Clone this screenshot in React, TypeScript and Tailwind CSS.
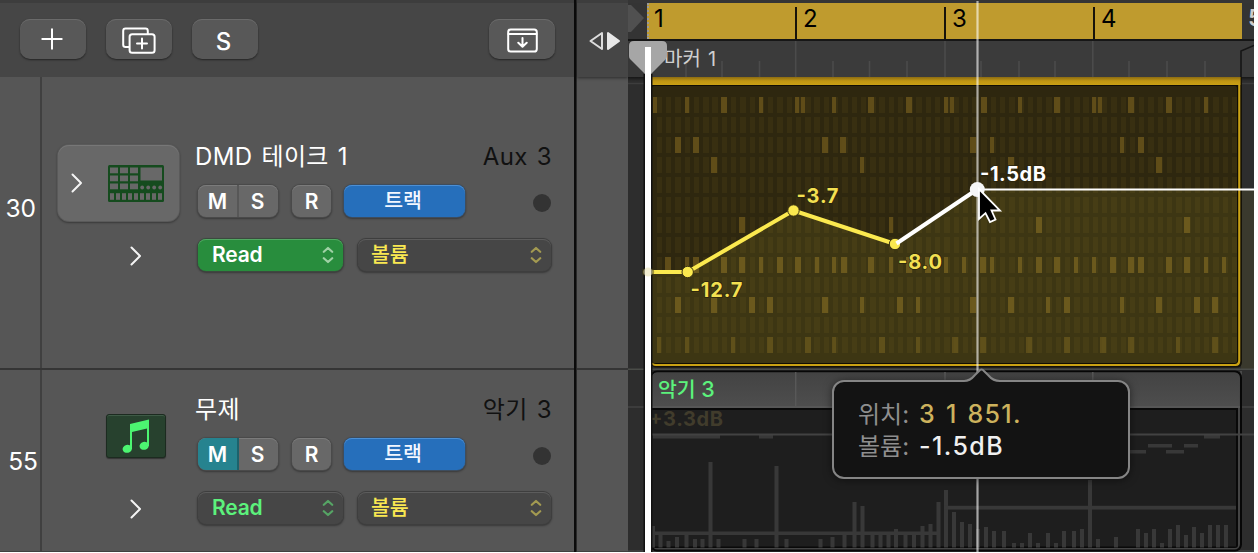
import React from 'react';

const FONT = "font-['Inter','Noto_Sans_CJK_KR',sans-serif]";

type Point = [number, number];

// [row, x positions of 6px hits, x positions of 4px hits]
const STEPS: [number, number[], number[]][] = [
  [0, [721, 868, 906, 981, 1054, 1128, 1166], [653, 685, 759, 795, 801, 832, 944, 950, 1018, 1092, 1098, 1204]],
  [2, [675, 693, 822, 840, 970, 1138], [990, 1120]],
  [3, [711, 1008, 1156], [860]],
  [6, [739, 1036, 1184], [889]],
  [8, [665, 693, 721, 739, 777, 795, 841, 868, 906, 925, 980, 1036, 1054, 1110, 1128, 1138, 1166, 1184], [685, 759, 815, 832, 889, 944, 962, 990, 1018, 1074, 1092, 1204, 1222]],
  [10, [675, 711, 749, 767, 822, 897, 970, 1008, 1064, 1156, 1194, 1212], [860, 916, 1046, 1120]],
  [12, [767, 805, 879, 952, 980, 1026, 1064, 1100, 1128, 1212], [657, 685, 731, 832, 916, 1176]],
];

const ROWS = Array.from({ length: 13 }, (_, i) => i);
const COLS = Array.from({ length: 63 }, (_, i) => i + 1);

const CURVE: Point[] = [[648, 272], [687.7, 272], [793.5, 210.5], [895, 244]];

// [x center, top]
const VELOCITIES: Point[] = [
  [653, 526], [660.5, 535], [668.5, 541], [677, 537], [686.5, 535], [695, 539], [702.5, 539], [710.5, 462], [718.5, 539],
  [744.5, 539], [756.5, 539], [776.5, 466], [786.5, 539], [820.5, 539], [832.5, 537], [844.5, 535], [854.5, 502], [862.5, 506],
  [872.5, 535], [880.5, 535], [888.5, 533], [896, 529], [905.5, 533], [914, 533], [922.5, 526], [930.5, 524], [938.5, 502],
  [946, 490], [954, 512], [962, 522], [970, 524], [978, 529], [986, 527], [994, 531], [1004, 531], [1014, 543], [1022, 543],
  [1030, 533], [1038, 543], [1048, 533], [1056, 543], [1064, 531], [1074, 531], [1082, 529], [1090, 480], [1098, 539],
  [1116, 537], [1138, 529], [1146, 533], [1154, 529], [1162, 543], [1170, 529], [1178, 525], [1186, 535], [1194, 527],
  [1202, 533], [1210, 525], [1218, 525], [1226, 525],
];

const NOTES: [number, number, number][] = [
  [653, 67, 435], [759, 14, 435], [1130, 16, 450], [1148, 24, 444], [1166, 18, 450], [1184, 14, 444], [1204, 16, 435],
];

const BEATS = [686, 722, 759.5, 833, 869.5, 907, 981, 1019, 1055, 1129, 1167, 1205];

const Chevron = () => (
  <svg width="14" height="20" viewBox="0 0 14 20" fill="none" stroke="#f4f4f4" strokeWidth="2" strokeLinecap="round" strokeLinejoin="round">
    <path d="M2.500 1.500 11 10 2.500 18.500" />
  </svg>
);

const ToolButton = ({ children, className = '' }: { children: React.ReactNode; className?: string }) => (
  <button className={`w-[66px] h-10 rounded-[10px] bg-[#585858] flex items-center justify-center text-white shadow-[0_1px_2px_rgba(0,0,0,0.5),inset_0_1px_0_#6a6a6a] ${className}`}>
    {children}
  </button>
);

const Select = ({ label, className, arrow, textClass }: { label: string; className: string; arrow: string; textClass: string }) => (
  <div className={`h-[32px] rounded-[8px] flex items-center justify-between pl-3.5 pr-[9px] ${className}`}>
    <span className={textClass}>{label}</span>
    <svg width="12" height="18" viewBox="0 0 12 18" fill="none" stroke={arrow} strokeWidth="2.2" strokeLinecap="round" strokeLinejoin="round">
      <path d="M1.800 5.800 6 2 10.200 5.800M1.800 12.200 6 16 10.200 12.200" />
    </svg>
  </div>
);

const DARK_SELECT = 'bg-[#464646] shadow-[0_0_0_1px_#3e3e3e,0_1px_2px_1px_rgba(0,0,0,0.35),inset_0_1px_0_#5c5c5c]';
const RAISED = 'shadow-[0_0_0_1px_#4a4a4a,0_1px_2px_1px_rgba(0,0,0,0.35),inset_0_1px_0_#7b7b7b]';

interface TrackProps {
  name: React.ReactNode;
  channel: React.ReactNode;
  muted?: boolean;
  active?: boolean;
}

const TrackControls = ({ name, channel, muted, active }: TrackProps) => (
  <div className="w-[357px] shrink-0">
    <div className="flex h-8 items-center justify-between text-[24px] tracking-[0.35px] [word-spacing:2px] leading-8">
      <span className="text-white whitespace-nowrap">{name}</span>
      <span className="text-[#111] whitespace-nowrap">{channel}</span>
    </div>
    <div className="mt-[12px] pl-[3px] flex items-center text-[21px] font-semibold text-white">
      <div className={`flex w-[80px] h-[32px] rounded-[8px] overflow-hidden bg-[#686868] ${RAISED}`}>
        <span className={`w-[41px] flex items-center justify-center border-r-2 pt-0.5 ${muted ? 'bg-[#26838f] border-[#1c626c]' : 'border-[#575757]'}`}>M</span>
        <span className="w-[39px] flex items-center justify-center pr-0.5 pt-0.5">S</span>
      </div>
      <div className={`ml-[14px] w-[39px] h-[32px] rounded-[8px] bg-[#686868] flex items-center justify-center pt-0.5 ${RAISED}`}>R</div>
      <div className="ml-[13px] w-[121px] h-[32px] rounded-[8px] bg-[#266fbb] text-[20.5px] font-medium flex items-center justify-center pr-[3px] text-[#f2f7ff] shadow-[0_0_0_1px_#3d4d5f,0_1px_2px_1px_rgba(0,0,0,0.35),inset_0_1px_0_#4c8fd4]">트랙</div>
      <div className="ml-auto mr-[1px] w-[18px] h-[18px] mt-[3px] rounded-full bg-[#333]" />
    </div>
    <div className="mt-[22px] pl-[3px] flex gap-[15px]">
      <Select
        label="Read"
        arrow={active ? '#9fd1a5' : '#56a565'}
        textClass={`text-[21px] font-semibold tracking-[-0.2px] ${active ? 'text-white' : 'text-[#5cf27c]'}`}
        className={`w-[145px] ${active ? 'bg-[#288d3d] shadow-[0_0_0_1px_#3b4a3e,0_1px_2px_1px_rgba(0,0,0,0.35),inset_0_1px_0_#52a863]' : DARK_SELECT}`}
      />
      <Select label="볼륨" arrow="#a39a51" textClass="text-[20.5px] font-medium -ml-[1px] text-[#f9e851]" className={`w-[193px] ${DARK_SELECT}`} />
    </div>
  </div>
);

const DrumMachineIcon = () => (
  <svg width="56" height="37" viewBox="0 0 56 37">
    <rect width="56" height="37" rx="1.5" fill="#154b1e" />
    <g fill="#686868">
      {[2, 12, 22].map((x) => [2.5, 10.5, 18.5].map((y) => <rect key={`${x}-${y}`} x={x} y={y} width="8" height="5.8" />))}
      <rect x="32.5" y="2.5" width="21.5" height="13" />
      {[34.2, 40.2, 46.2, 52.2].map((x) => <circle key={x} cx={x} cy="22.5" r="1.9" />)}
      {[0, 1, 2, 3, 4, 5, 6, 7, 8].map((i) => <rect key={i} x={2 + i * 6} y="28.2" width="4" height="6.6" />)}
    </g>
  </svg>
);

const Toolbar = () => (
  <div className="h-[77px] shrink-0 bg-[#464646] border-t-[3px] border-[#3d3d3d] flex items-start pt-4 pl-5 pr-[19px]">
    <ToolButton className="pr-[2px]">
      <svg width="22" height="22" viewBox="0 0 22 22" stroke="white" strokeWidth="2" strokeLinecap="round"><path d="M11 1.300V20.700M1.300 11H20.700" /></svg>
    </ToolButton>
    <ToolButton className="ml-5 pt-[3px]">
      <svg width="34" height="28" viewBox="0 0 34 28" fill="none" stroke="white" strokeWidth="2" strokeLinecap="round" strokeLinejoin="round">
        <path d="M7 20H3.500Q1.200 20 1.200 17.700V4Q1.200 1.600 3.500 1.600H23.500Q25.800 1.600 25.800 4V7" />
        <rect x="7.600" y="7.200" width="25" height="18.600" rx="2.600" />
        <path d="M20 11.500V21.500M15 16.500H25" />
      </svg>
    </ToolButton>
    <ToolButton className="ml-5 text-[24px] font-medium pt-[5px] pr-[3px]">S</ToolButton>
    <ToolButton className="ml-auto pt-[2px]">
      <svg width="31" height="25" viewBox="0 0 31 25" fill="none" stroke="white" strokeWidth="2" strokeLinecap="round" strokeLinejoin="round">
        <rect x="1.200" y="1.500" width="28.600" height="22" rx="2.600" />
        <path d="M1.500 6H29.500M15.500 10V18.500M11.300 14.700 15.500 18.700 19.700 14.700" />
      </svg>
    </ToolButton>
  </div>
);

const DrumRegion = () => (
  <svg className="block" width="626" height="293" viewBox="628 77 626 293">
    <defs>
      <linearGradient id="cap" x1="0" y1="0" x2="0" y2="1">
        <stop offset="0" stopColor="#8c6c12" />
        <stop offset="0.5" stopColor="#c09613" />
        <stop offset="1" stopColor="#c9a015" />
      </linearGradient>
      <clipPath id="drum"><rect x="652" y="86" width="585" height="277" rx="2" /></clipPath>
      <linearGradient id="shade" x1="0" y1="0" x2="0" y2="1">
        <stop offset="0" stopColor="#000" stopOpacity="0.5" />
        <stop offset="1" stopColor="#000" stopOpacity="0" />
      </linearGradient>
    </defs>
    <rect x="628" y="77" width="626" height="293" fill="#2d2d2d" />
    <rect x="628" y="77" width="626" height="4" fill="url(#shade)" />
    <path d="M628 83.500H652M1241 83.500H1254" stroke="#3d3d3d" strokeWidth="1.5" />
    <rect x="1241" y="190" width="13" height="180" fill="#3a392d" />
    <path d="M651 77H1242V362Q1242 367.500 1236.500 367.500H657Q651 367.500 651 362Z" fill="#15120a" />
    <path d="M651 77H1240.300V361Q1240.300 366 1235.500 366H656Q651.500 366 651.500 362Z" fill="#caa214" />
    <rect x="651" y="77" width="589.3" height="8" fill="url(#cap)" />
    <path d="M651 85H1238.200V360Q1238.200 364 1234.500 364H656Q652 364 651 360Z" fill="#100d04" />
    <g clipPath="url(#drum)">
      <rect x="652" y="86" width="585" height="278" fill="#2e270f" />
      {ROWS.map((r) => COLS.map((c) => {
        const x = Math.round(647.5 + c * 9.275);
        const end = Math.round(652.9 + c * 9.275);
        return <rect key={`${r}-${c}`} x={x} y={97 + r * 20} width={end - x} height="16" fill="#382f11" />;
      }))}
      {STEPS.map(([row, wide, narrow]) => (
        <g key={row} fill="#65511a" opacity={row === 12 ? 0.6 : 0.9}>
          {wide.map((x) => <rect key={`w${x}`} x={x} y={97 + row * 20} width="6" height="16" />)}
          {narrow.map((x) => <rect key={`n${x}`} x={x} y={97 + row * 20} width="4" height="16" />)}
        </g>
      ))}
      <path d="M648 272H687.700L793.500 210.500 895 244 977.500 189.500H1254V364H648Z" fill="#ffee55" opacity="0.075" />
    </g>
    <path d="M628 369.300H1254" stroke="#4a4c48" strokeWidth="1.5" />
    <path d="M977.500 189.500H1254" stroke="white" strokeWidth="2" />
    <path d={`M${CURVE.map((p) => p.join(' ')).join('L')}`} fill="none" stroke="#fbe94f" strokeWidth="4" />
    {CURVE.map(([x, y]) => <circle key={x} cx={x} cy={y} r="5.7" fill="#fbe94f" stroke="#3a3211" strokeWidth="1" opacity={x === 648 ? 0.5 : 1} />)}
    <path d="M896.500 243.500 977 189.500" stroke="white" strokeWidth="4" />
    <g fontFamily="Inter, sans-serif" fontSize="20" fontWeight="700" fill="#f3e051" stroke="#2b240c" strokeWidth="1.5" paintOrder="stroke">
      <text x="690.500" y="296.500" textLength="52">-12.7</text>
      <text x="796.500" y="202.500" textLength="42">-3.7</text>
      <text x="898" y="268.500" textLength="44">-8.0</text>
      <text x="980" y="181" textLength="66" fill="#fff">-1.5dB</text>
    </g>
  </svg>
);

const MidiRegion = () => (
  <div className="relative h-[182px] bg-[#2d2d2d]">
    <svg className="block" width="626" height="182" viewBox="628 370 626 182">
      <defs>
        <linearGradient id="head" x1="0" y1="0" x2="0" y2="1">
          <stop offset="0" stopColor="#434343" />
          <stop offset="1" stopColor="#4e4e4e" />
        </linearGradient>
      </defs>
      <path d="M628 407H1254M628 551H1254" stroke="#414141" strokeWidth="1.5" />
      <path d="M1241 371V384" stroke="#555" strokeWidth="1.5" />
      <rect x="650" y="370.500" width="592" height="181" rx="7" fill="#070707" />
      <rect x="652" y="372.500" width="588" height="177" rx="5.500" fill="#444" />
      <path d="M652 408V378Q652 372.500 657 372.500H1234.500Q1239.500 372.500 1239.500 378V408Z" fill="url(#head)" />
      <path d="M795.700 372V406M945 372V406M1092.800 372V406" stroke="#585858" strokeWidth="1.5" />
      <path d="M652 407H1240" stroke="#5a5a5a" strokeWidth="1.5" />
      <path d="M651.500 408H1238V545Q1238 548 1235 548H655Q651.500 548 651.500 545Z" fill="#090909" />
      <path d="M652 410H1236V546.500H654Q652 546.500 652 544Z" fill="#1e1e1e" />
      <g fill="#383838">
        {VELOCITIES.map(([x, top]) => <rect key={x} x={x - 2} y={top} width="4" height={547.5 - top} />)}
        {NOTES.map(([x, w, y]) => <rect key={x} x={x} y={y} width={w} height="3.500" />)}
        <rect x="653" y="531.500" width="287" height="3.500" />
        <rect x="944" y="505.800" width="292" height="3.800" />
      </g>
      <path d="M652 434.500H1254" stroke="#424242" strokeWidth="1.8" />
      <text x="649" y="426" fontFamily="Inter, sans-serif" fontSize="20" fontWeight="700" textLength="74" fill="#413c2c">+3.3dB</text>
    </svg>
    <span className="absolute left-[30px] top-[4px] text-[#5cf27c] text-[20.5px] font-medium leading-[30px] whitespace-nowrap">악기 <span className="text-[21.5px]">3</span></span>
  </div>
);

const Ruler = () => (
  <div className="h-[77px] bg-[#3b3b3b] border-t-[3px] border-[#353535] relative overflow-hidden">
    <div className="flex h-[36px] bg-[#343434]">
      <div className="w-[19px] shrink-0 pt-px">
        <svg width="17" height="28" viewBox="0 0 17 28"><path d="M0 1H3L16 14 3 28H0Z" fill="#505050" /></svg>
      </div>
      <div className="flex w-[595px] shrink-0 bg-[#bf9b2e] text-[24px] leading-[31px] text-black border-l-2 border-dotted border-[#999]">
        <span className="w-[146px] shrink-0 pl-[5px]">1</span>
        {['2', '3', '4'].map((n) => (
          <span key={n} className="w-[149px] shrink-0 h-[32px] self-end border-l-2 border-[#17130a] pl-[6px] leading-[23px]">{n}</span>
        ))}
      </div>
      <span className="pl-[6px] text-[23px] leading-[31px] font-semibold text-[#ccc]">5</span>
    </div>
    <svg className="block" width="626" height="38" viewBox="628 39 626 38">
      <rect x="628" y="39" width="626" height="2" fill="#161616" />
      <rect x="628" y="41" width="21" height="36" fill="#373737" />
      <path d="M795.700 41V77M945 41V77M1092.800 41V77" stroke="#4b4b4b" strokeWidth="1.6" />
      {BEATS.map((x) => <path key={x} d={`M${x} 61V77`} stroke="#4b4b4b" strokeWidth="1.6" />)}
      <path d="M1241 77V51L1254 45.500" fill="none" stroke="#161616" strokeWidth="1.6" />
    </svg>
    <span className="absolute left-[36px] top-[42px] text-[20px] leading-[28px] tracking-[0.2px] [word-spacing:1px] text-[#cfcfcf] whitespace-nowrap">마커 1</span>
  </div>
);

const HelpTag = () => (
  <div className="absolute left-[204px] top-[380px] w-[298px] h-[99px] rounded-[12px] border-2 border-[#858585] bg-[#131313] shadow-[0_1px_8px_rgba(0,0,0,0.5)] pl-[24px] pt-[17px]">
    <svg className="absolute left-[130px] -top-[14px]" width="36" height="16" viewBox="0 0 36 16">
      <path d="M0 13Q6 13 10.500 7.500L15 3Q17.500 0 20 3L24.500 7.500Q29 13 36 13V16H0Z" fill="#131313" />
      <path d="M0 13Q6 13 10.500 7.500L15 3Q17.500 0 20 3L24.500 7.500Q29 13 36 13" fill="none" stroke="#858585" strokeWidth="2" />
    </svg>
    <div className="flex h-[31px] items-center text-[24px] whitespace-nowrap">
      <span className="w-[61px] text-[#8f8f8f]">위치:</span>
      <span className="text-[25px] font-medium tracking-[1.3px] [word-spacing:2px] text-[#cdb25d]">3 1 851.</span>
    </div>
    <div className="flex h-[33px] items-center text-[24px] whitespace-nowrap">
      <span className="w-[61px] text-[#8f8f8f]">볼륨:</span>
      <span className="text-[25px] font-medium tracking-[1.400px] text-[#f0f0f0]">-1.5dB</span>
    </div>
  </div>
);

export default function App() {
  return (
    <div className={`w-[1258px] h-[553px] bg-white overflow-hidden ${FONT}`}>
      <div className="flex w-[1254px] h-[552px] bg-[#565656] overflow-hidden">
        {/* track headers */}
        <div className="w-[574px] shrink-0 flex flex-col">
          <Toolbar />
          <div className="flex h-[293px] border-b-2 border-[#353535]">
            <div className="w-[42px] pt-[115px] pr-[4px] border-r-2 border-[#404040] text-right text-[24.5px] leading-[32px] text-white">30</div>
            <div className="w-[153px] pt-[68px] flex flex-col items-center">
              <div className="w-[121px] h-[76px] rounded-[11px] bg-[#686868] flex items-center pl-[12px] shadow-[0_0_0_1px_#5a5a5a,0_1px_2px_1px_rgba(0,0,0,0.35),inset_0_1px_0_#777]">
                <Chevron />
                <div className="ml-[24px]"><DrumMachineIcon /></div>
              </div>
              <div className="mt-[25px] ml-[34px]"><Chevron /></div>
            </div>
            <div className="pt-[64px]">
              <TrackControls active name="DMD 테이크 1" channel="Aux 3" />
            </div>
          </div>
          <div className="flex flex-1 border-b border-[#404040]">
            <div className="w-[42px] pt-[75px] pr-[2px] border-r-2 border-[#404040] text-right text-[24.5px] leading-[32px] text-white">55</div>
            <div className="w-[153px] pt-[44px] flex flex-col items-center">
              <div className="ml-[35px] w-[60px] h-[44px] rounded-[3px] bg-[#27412e] border border-[#1c2b20] flex items-center justify-center shadow-[0_1px_1px_rgba(0,0,0,0.4),inset_0_1px_0_#3e5a46]">
                <svg width="28" height="34" viewBox="0 0 28 34" fill="#4cf571">
                  <path d="M8 5 27 0.500V27H25V9.500L10 13V30H8Z" />
                  <ellipse cx="5.300" cy="29.800" rx="4.700" ry="4" transform="rotate(-15 5.300 29.800)" />
                  <ellipse cx="22.200" cy="26.800" rx="4.700" ry="4" transform="rotate(-15 22.200 26.800)" />
                </svg>
              </div>
              <div className="mt-[41px] ml-[34px]"><Chevron /></div>
            </div>
            <div className="pt-[24px]">
              <TrackControls muted name="무제" channel="악기 3" />
            </div>
          </div>
        </div>

        <div className="w-[3px] shrink-0 bg-[#0b0b0b] border-r border-[#2a2a2a]" />

        <div className="w-[51px] shrink-0 flex flex-col">
          <div className="h-[77px] bg-[#464646] border-t-[3px] border-[#3d3d3d] flex items-center justify-center pt-px pl-1 shadow-[0_1px_3px_rgba(0,0,0,0.5)]">
            <svg width="32" height="20" viewBox="0 0 32 20" strokeLinejoin="round">
              <path d="M13 2V18L1.500 10Z" fill="none" stroke="#ddd" strokeWidth="2" />
              <path d="M19 2V18L30 10Z" fill="#e8e8e8" stroke="#e8e8e8" strokeWidth="2" />
            </svg>
          </div>
          <div className="h-[293px] border-b-2 border-[#353535]" />
          <div className="flex-1 border-b border-[#404040]" />
        </div>

        {/* tracks area */}
        <div className="relative w-[626px] shrink-0">
          <Ruler />
          <DrumRegion />
          <MidiRegion />

          <svg className="absolute left-0 top-0 pointer-events-none" width="360" height="552" viewBox="628 0 360 552">
            <path d="M629 46Q629 41 634 41H662Q667 41 667 46V56Q667 58 665 60L651 74H645L630 59Q629 58 629 56Z" fill="#a6a6a6" />
            <rect x="643.500" y="74" width="9" height="478" fill="#111" />
            <rect x="645" y="47" width="6" height="505" fill="#fff" />
            <circle cx="648" cy="272" r="4.500" fill="#e9e3b5" opacity="0.6" />
            <rect x="976.400" y="1" width="2.200" height="551" fill="#fff" opacity="0.6" />
          </svg>

          <HelpTag />
          <svg className="absolute left-[340px] top-[180px]" width="36" height="46" viewBox="968 180 36 46">
            <circle cx="977.300" cy="189.500" r="7.500" fill="#f6f6f6" />
            <path d="M979 189V219L985.500 213.200 990 222 995.500 219.500 991.500 210.500H1000Z" fill="#000" stroke="#fff" strokeWidth="1.800" strokeLinejoin="miter" />
          </svg>
        </div>
      </div>
    </div>
  );
}
